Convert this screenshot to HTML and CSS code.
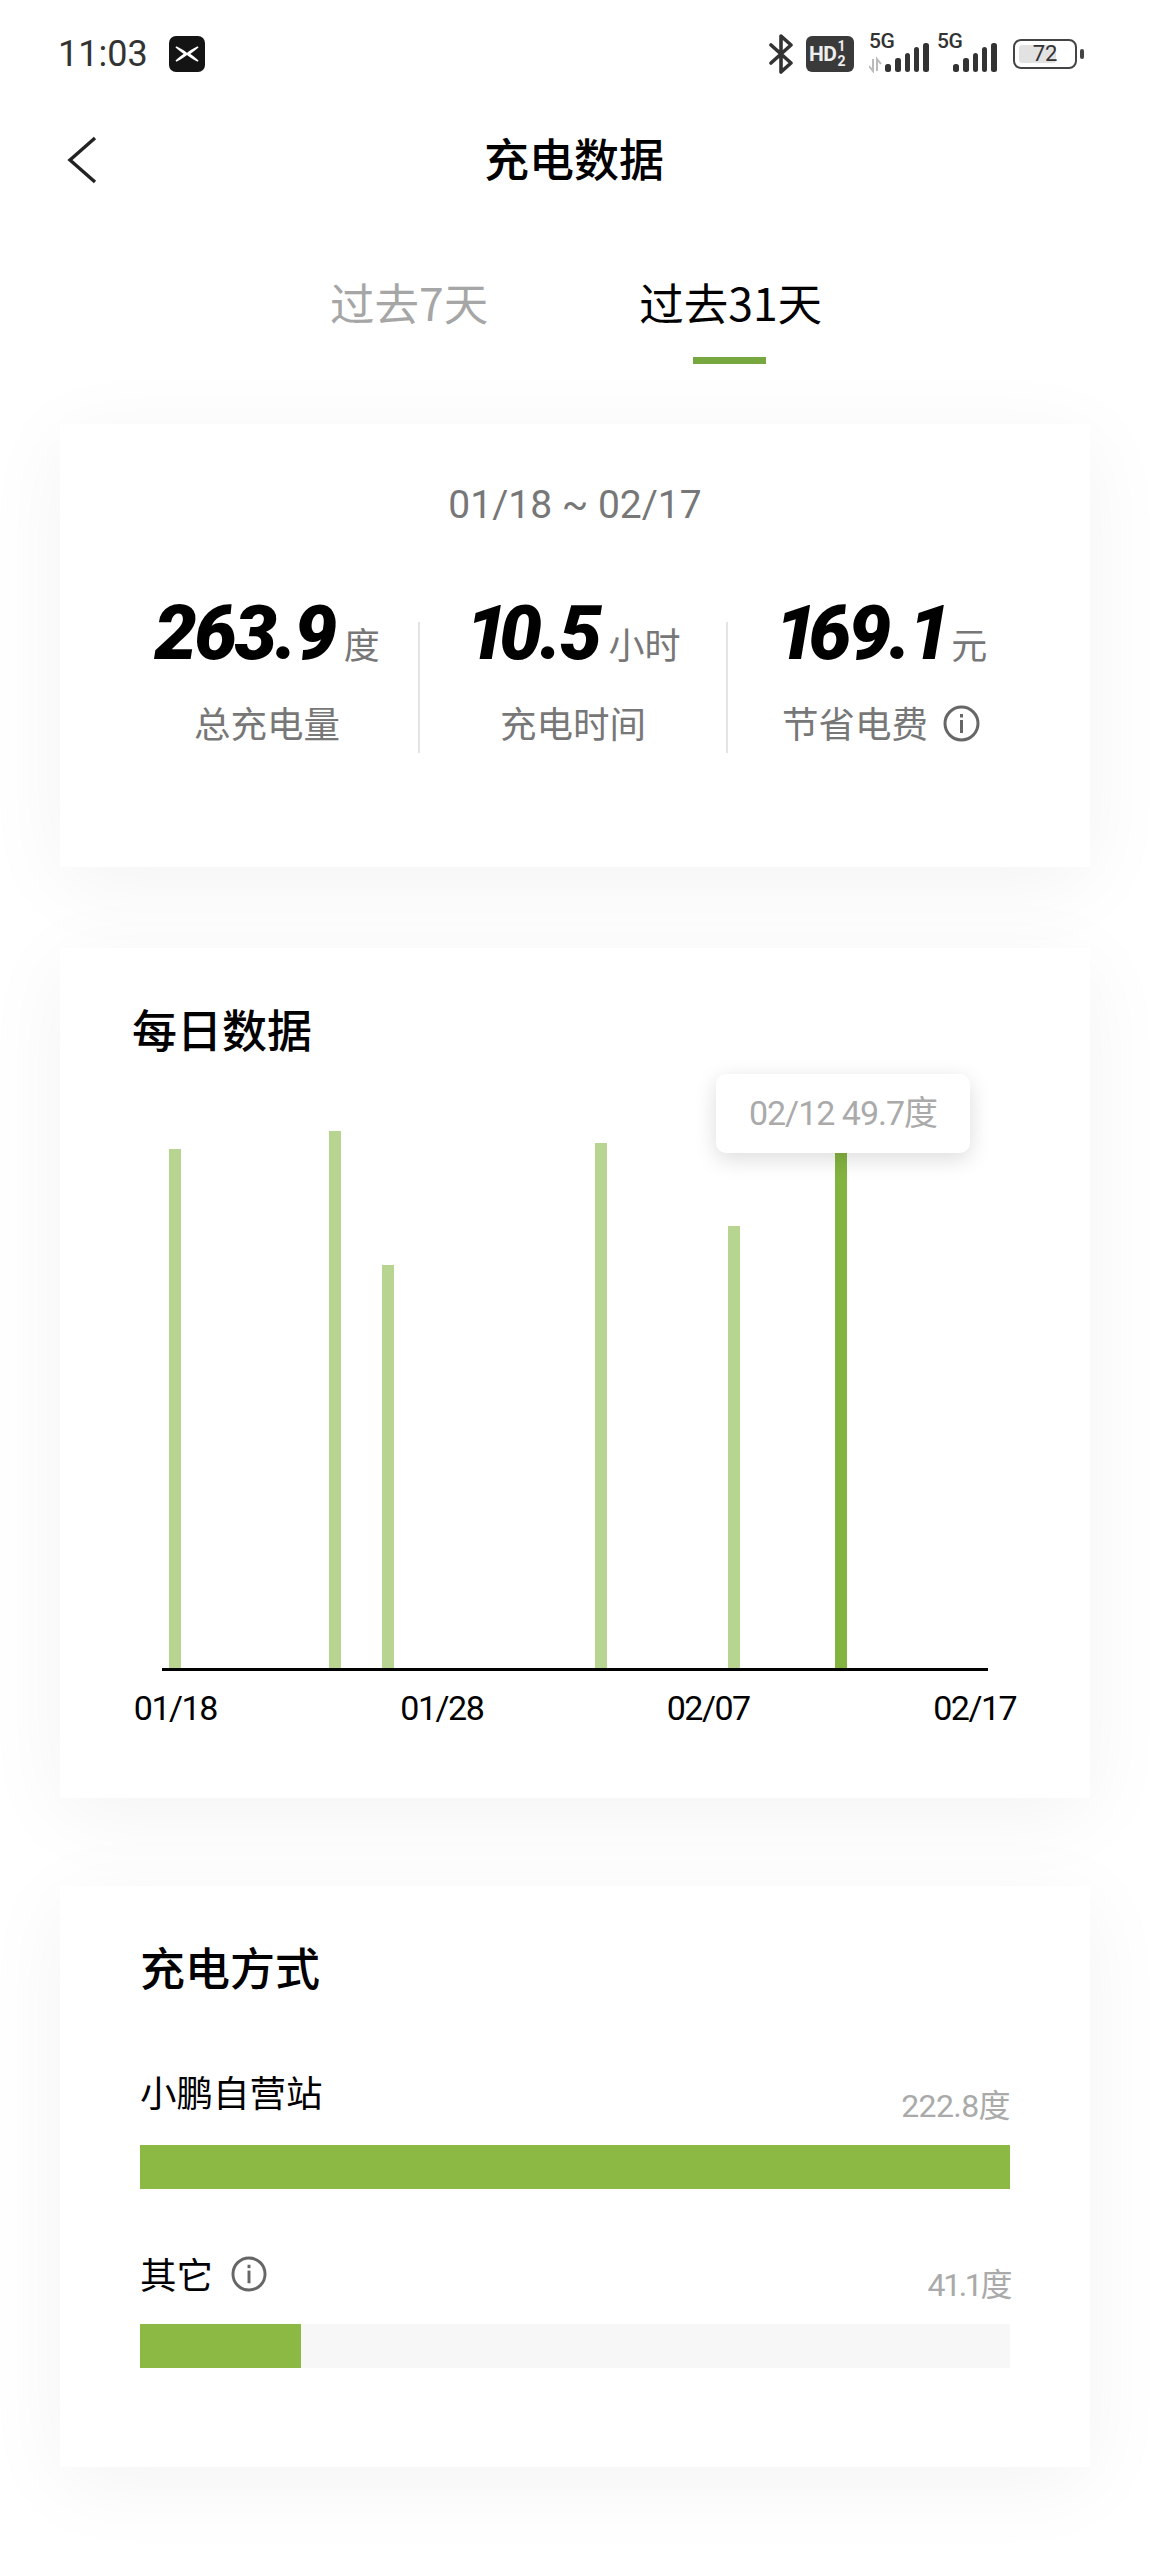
FILE: index.html
```html
<!DOCTYPE html>
<html lang="zh-CN">
<head>
  <meta charset="utf-8">
  <title>充电数据</title>
  <link rel="stylesheet" href="styles.css">
</head>
<body>
  <div class="status_bar">
    <div class="status_left">
      <span class="hora">11:03</span>
      <svg class="logo" width="36" height="36" viewBox="0 0 36 36">
        <rect width="36" height="36" rx="7" fill="#141414"/>
        <path d="M7 11 Q15 15 18 18 Q21 15 29 11 Q23 16 20 18 Q23 20 29 25 Q21 21 18 18 Q15 21 7 25 Q13 20 16 18 Q13 16 7 11Z" fill="#fff" stroke="#fff" stroke-width="1.6"/>
      </svg>
    </div>
    <div class="status_right">
      <svg class="bluetooth" width="25" height="40" viewBox="0 0 25 40">
        <path d="M2 11 L22 29 L12 38 V2 L22 11 L2 29" fill="none" stroke="#333" stroke-width="3.6" stroke-linecap="round" stroke-linejoin="round"/>
      </svg>
      <div class="hd">
        <span>HD</span>
        <span class="hd_num">1<br>2</span>
      </div>
      <div class="sinal sinal_um">
        <span class="sinal_5g">5G</span>
        <svg width="60" height="30" viewBox="0 0 60 30">
          <path d="M4 16 V28 L0 23 M8 28 V16 L12 21" fill="none" stroke="#bbb" stroke-width="2"/>
          <rect x="16" y="21" width="6" height="8" rx="2.5" fill="#333"/>
          <rect x="26" y="15" width="6" height="14" rx="2.5" fill="#333"/>
          <rect x="36" y="10" width="5" height="19" rx="2.5" fill="#333"/>
          <rect x="45" y="4" width="5" height="25" rx="2.5" fill="#333"/>
          <rect x="54" y="0" width="6" height="29" rx="2.5" fill="#333"/>
        </svg>
      </div>
      <div class="sinal sinal_dois">
        <span class="sinal_5g">5G</span>
        <svg width="60" height="30" viewBox="0 0 60 30">
          <rect x="16" y="21" width="6" height="8" rx="2.5" fill="#333"/>
          <rect x="26" y="15" width="6" height="14" rx="2.5" fill="#333"/>
          <rect x="36" y="10" width="5" height="19" rx="2.5" fill="#333"/>
          <rect x="45" y="4" width="5" height="25" rx="2.5" fill="#333"/>
          <rect x="54" y="0" width="6" height="29" rx="2.5" fill="#333"/>
        </svg>
      </div>
      <div class="bateria">
        <div class="bateria_corpo">
          <div class="bateria_nivel"></div>
          <span class="bateria_num">72</span>
        </div>
        <div class="bateria_ponta"></div>
      </div>
    </div>
  </div>

  <div class="cabecalho">
    <svg class="voltar" width="30" height="48" viewBox="0 0 30 48">
      <path d="M28 2 L3 24 L28 46" fill="none" stroke="#222" stroke-width="3.4"/>
    </svg>
    <h1 class="titulo">充电数据</h1>
  </div>

  <div class="abas">
    <div class="aba">过去7天</div>
    <div class="aba aba_ativa">过去31天</div>
  </div>

  <section class="cartao cartao_resumo">
    <div class="periodo">01/18 ~ 02/17</div>
    <div class="resumo">
      <div class="resumo_item">
        <div class="resumo_valor"><b>263.9</b><span>度</span></div>
        <div class="resumo_nome">总充电量</div>
      </div>
      <div class="resumo_item">
        <div class="resumo_valor"><b><i class="um">1</i>0.5</b><span>小时</span></div>
        <div class="resumo_nome">充电时间</div>
      </div>
      <div class="resumo_item">
        <div class="resumo_valor"><b><i class="um">1</i>69.<i class="um">1</i></b><span>元</span></div>
        <div class="resumo_nome">节省电费
          <svg class="info" width="37" height="37" viewBox="0 0 37 37">
            <circle cx="18.5" cy="18.5" r="16.5" fill="none" stroke="#666" stroke-width="3"/>
            <rect x="17" y="15" width="3" height="13" fill="#666"/>
            <rect x="17" y="9" width="3" height="3.5" fill="#666"/>
          </svg>
        </div>
      </div>
    </div>
  </section>

  <section class="cartao cartao_diario">
    <h2 class="subtitulo">每日数据</h2>
    <div class="grafico">
      <div class="dica">02/12 49.7度</div>
      <div class="barras">
        <div class="barra" style="grid-column: 1; height: 519px"></div>
        <div class="barra" style="grid-column: 7; height: 537px"></div>
        <div class="barra" style="grid-column: 9; height: 403px"></div>
        <div class="barra" style="grid-column: 17; height: 525px"></div>
        <div class="barra" style="grid-column: 22; height: 442px"></div>
        <div class="barra barra_ativa" style="grid-column: 26; height: 515px"></div>
      </div>
      <div class="datas">
        <span style="grid-column: 1">01/18</span>
        <span style="grid-column: 11">01/28</span>
        <span style="grid-column: 21">02/07</span>
        <span style="grid-column: 31">02/17</span>
      </div>
    </div>
  </section>

  <section class="cartao cartao_modo">
    <h2 class="subtitulo">充电方式</h2>
    <div class="modo modo_primeiro">
      <div class="modo_linha">
        <div class="modo_nome">小鹏自营站</div>
        <div class="modo_valor">222.8度</div>
      </div>
      <div class="trilha"><div class="preenchido" style="width: 100%"></div></div>
    </div>
    <div class="modo">
      <div class="modo_linha">
        <div class="modo_nome modo_nome_info">其它
          <svg class="info" width="36" height="36" viewBox="0 0 37 37">
            <circle cx="18.5" cy="18.5" r="16.5" fill="none" stroke="#666" stroke-width="3"/>
            <rect x="17" y="15" width="3" height="13" fill="#666"/>
            <rect x="17" y="9" width="3" height="3.5" fill="#666"/>
          </svg>
        </div>
        <div class="modo_valor modo_valor_curto">41.1度</div>
      </div>
      <div class="trilha"><div class="preenchido" style="width: 18.5%"></div></div>
    </div>
  </section>
</body>
</html>
```

FILE: styles.css
```css
* {
  box-sizing: border-box;
}

body {
  margin: 0;
  height: 2556px;
  overflow: hidden;
  background-color: #fff;
  font-family: "Roboto", "Noto Sans CJK SC", sans-serif;
  color: #000;
}

/* barra de status */
.status_bar {
  height: 107px;
  padding: 0 66px 0 58px;
  display: flex;
  justify-content: space-between;
  align-items: center;
}

.status_left {
  display: flex;
  align-items: center;
  gap: 21px;
}

.hora {
  font-size: 36px;
  color: #333;
}

.status_right {
  display: flex;
  align-items: center;
}

.hd {
  width: 48px;
  height: 36px;
  margin-left: 12px;
  padding-left: 3px;
  border-radius: 6px;
  background-color: #3a3a3a;
  color: #eee;
  font-size: 21px;
  font-weight: 700;
  letter-spacing: -0.5px;
  display: flex;
  align-items: center;
  gap: 1px;
}

.hd_num {
  font-size: 14px;
  line-height: 15px;
}

.sinal {
  position: relative;
  height: 38px;
  display: flex;
  align-items: flex-end;
}

.sinal_um {
  margin-left: 15px;
}

.sinal_dois {
  margin-left: 8px;
}

.sinal_5g {
  font-size: 21px;
  line-height: 21px;
  font-weight: 500;
  letter-spacing: -0.5px;
  color: #333;
  position: absolute;
  left: 0;
  top: -4px;
}

.bateria {
  margin-left: 16px;
  display: flex;
  align-items: center;
  gap: 3px;
}

.bateria_corpo {
  position: relative;
  width: 64px;
  height: 30px;
  padding: 4px;
  border: 2px solid #444;
  border-radius: 8px;
}

.bateria_nivel {
  width: 72%;
  height: 100%;
  border-radius: 3px;
  background-color: #e2e2e2;
}

.bateria_num {
  position: absolute;
  left: 0;
  right: 0;
  top: 0;
  font-size: 22px;
  line-height: 26px;
  text-align: center;
  color: #333;
}

.bateria_ponta {
  width: 4px;
  height: 10px;
  border-radius: 2px;
  background-color: #444;
}

/* cabecalho */
.cabecalho {
  position: relative;
  height: 101px;
  display: flex;
  align-items: center;
  justify-content: center;
}

.voltar {
  position: absolute;
  left: 67px;
  top: 29px;
}

.titulo {
  margin: 0 2px 0 0;
  font-size: 45px;
  font-weight: 500;
}

/* abas */
.abas {
  height: 216px;
  padding-top: 64px;
  padding-left: 330px;
  display: flex;
  gap: 151px;
}

.aba {
  position: relative;
  height: 60px;
  font-size: 44.5px;
  line-height: 60px;
  font-family: "Noto Sans CJK SC", sans-serif;
  color: #a6a6a6;
}

.aba_ativa {
  color: #000;
}

.aba_ativa::after {
  content: "";
  position: absolute;
  left: 54px;
  top: 85px;
  width: 73px;
  height: 7px;
  background-color: #76a83f;
}

/* cartoes */
.cartao {
  width: 1030px;
  margin-left: 60px;
  background-color: #fff;
  box-shadow: 0 16px 80px rgba(0, 0, 0, 0.05);
}

.cartao_resumo {
  height: 443px;
  padding: 53px 50px 0;
}

.periodo {
  font-size: 39px;
  line-height: 56px;
  text-align: center;
  color: #777;
}

.resumo {
  margin-top: 89px;
  display: grid;
  grid-template-columns: repeat(3, 308px);
}

.resumo_item {
  height: 131px;
  display: flex;
  flex-direction: column;
  align-items: center;
}

.resumo_item:first-child {
  padding-left: 6px;
}

.resumo_item + .resumo_item {
  border-left: 2px solid #e4e4e4;
}

.resumo_valor {
  height: 64px;
  margin-top: -21px;
  display: flex;
  align-items: baseline;
  gap: 9px;
}

.resumo_valor b {
  font-size: 76px;
  line-height: 64px;
  font-weight: 900;
  font-style: italic;
  letter-spacing: -2.5px;
}

.resumo_valor .um {
  letter-spacing: -9px;
}

.resumo_valor span {
  font-family: "Noto Sans CJK SC", sans-serif;
  font-size: 36px;
  color: #777;
}

.resumo_nome {
  margin-top: 33px;
  font-family: "Noto Sans CJK SC", sans-serif;
  font-size: 36.5px;
  line-height: 50px;
  color: #777;
  display: flex;
  align-items: center;
  gap: 15px;
}

.subtitulo {
  margin: 0;
  font-size: 45px;
  line-height: 64px;
  font-weight: 500;
  font-family: "Noto Sans CJK SC", sans-serif;
}

.cartao_diario {
  height: 850px;
  margin-top: 81px;
  padding: 49px 102px 0 72px;
}

.grafico {
  position: relative;
  margin: 0 0 0 30px;
  width: 826px;
}

.dica {
  position: absolute;
  left: 554px;
  top: 13px;
  width: 254px;
  height: 79px;
  border-radius: 10px;
  background-color: #fff;
  box-shadow: 0 6px 22px rgba(0, 0, 0, 0.14);
  font-size: 34px;
  line-height: 79px;
  letter-spacing: -1px;
  text-align: center;
  color: #aaa;
}

.barras {
  height: 610px;
  padding-right: 1px;
  display: grid;
  grid-template-columns: repeat(31, minmax(0, 1fr));
  align-items: end;
  justify-items: center;
  border-bottom: 3px solid #000;
}

.barra {
  grid-row: 1;
  width: 12px;
  background-color: #b7d491;
}

.barra_ativa {
  background-color: #84b440;
}

.datas {
  display: grid;
  grid-template-columns: repeat(31, minmax(0, 1fr));
  margin-top: 13px;
}

.datas span {
  grid-row: 1;
  justify-self: center;
  font-size: 34px;
  line-height: 48px;
  letter-spacing: -1.5px;
  white-space: nowrap;
}

.cartao_modo {
  height: 581px;
  margin-top: 88px;
  padding: 49px 80px 0;
}

.modo_primeiro {
  margin-top: 64px;
}

.modo {
  margin-bottom: 53px;
}

.modo_linha {
  display: flex;
  justify-content: space-between;
}

.modo_nome {
  height: 50px;
  margin-top: 4px;
  font-family: "Noto Sans CJK SC", sans-serif;
  font-size: 36.5px;
  line-height: 50px;
  display: flex;
  align-items: center;
  gap: 18px;
}

.modo_nome_info {
  margin-top: 7px;
}

.modo_valor {
  margin-top: 19px;
  font-size: 32px;
  line-height: 48px;
  letter-spacing: -0.6px;
  color: #aaa;
}

.modo_valor_curto {
  letter-spacing: -2.4px;
}

.trilha {
  height: 44px;
  margin-top: 15px;
  background-color: #f7f7f7;
}

.preenchido {
  height: 100%;
  background-color: #8bb944;
}
```
